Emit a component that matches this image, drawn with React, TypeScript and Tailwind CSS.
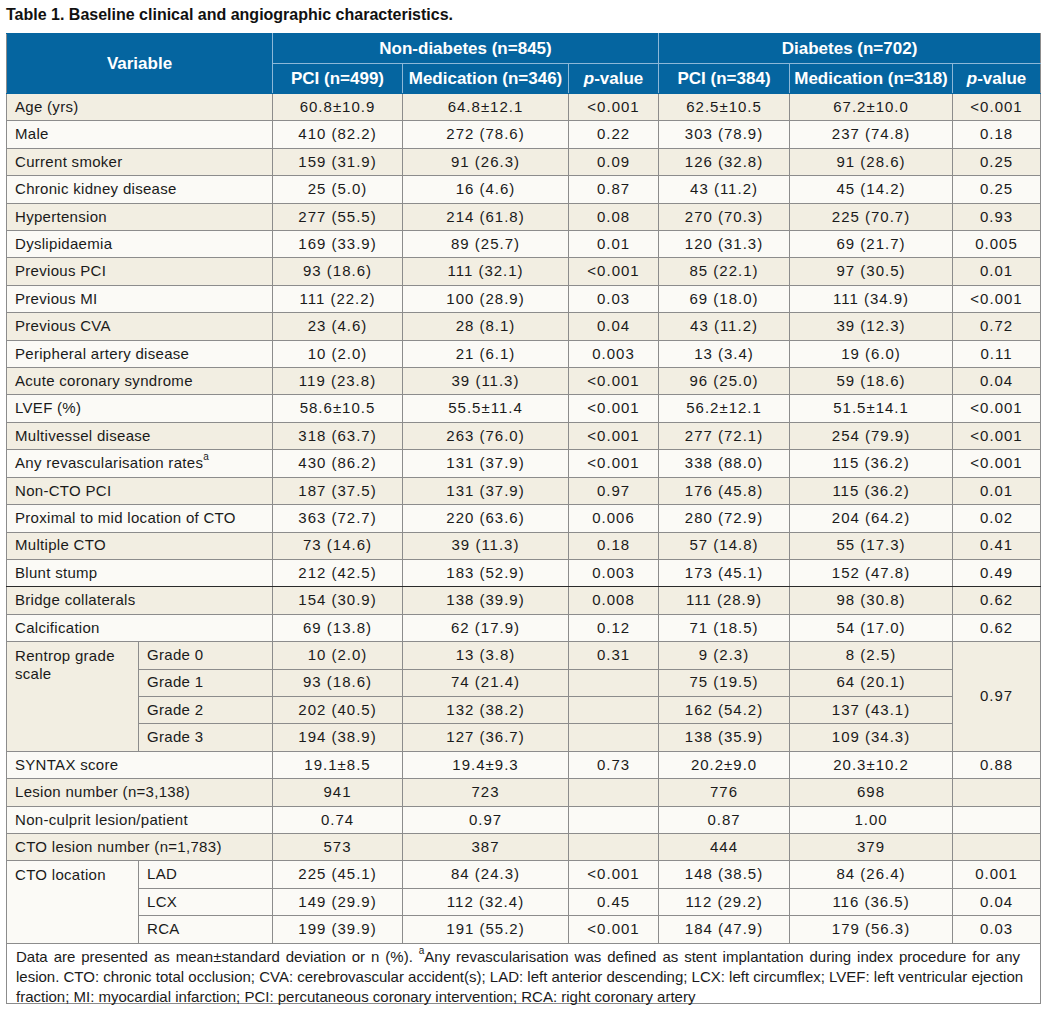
import React from "react"

type Row = { label: React.ReactNode; cells: string[] }

const simpleRows: Row[] = [
    { label: "Age (yrs)", cells: ["60.8±10.9", "64.8±12.1", "<0.001", "62.5±10.5", "67.2±10.0", "<0.001"] },
    { label: "Male", cells: ["410 (82.2)", "272 (78.6)", "0.22", "303 (78.9)", "237 (74.8)", "0.18"] },
    { label: "Current smoker", cells: ["159 (31.9)", "91 (26.3)", "0.09", "126 (32.8)", "91 (28.6)", "0.25"] },
    { label: "Chronic kidney disease", cells: ["25 (5.0)", "16 (4.6)", "0.87", "43 (11.2)", "45 (14.2)", "0.25"] },
    { label: "Hypertension", cells: ["277 (55.5)", "214 (61.8)", "0.08", "270 (70.3)", "225 (70.7)", "0.93"] },
    { label: "Dyslipidaemia", cells: ["169 (33.9)", "89 (25.7)", "0.01", "120 (31.3)", "69 (21.7)", "0.005"] },
    { label: "Previous PCI", cells: ["93 (18.6)", "111 (32.1)", "<0.001", "85 (22.1)", "97 (30.5)", "0.01"] },
    { label: "Previous MI", cells: ["111 (22.2)", "100 (28.9)", "0.03", "69 (18.0)", "111 (34.9)", "<0.001"] },
    { label: "Previous CVA", cells: ["23 (4.6)", "28 (8.1)", "0.04", "43 (11.2)", "39 (12.3)", "0.72"] },
    { label: "Peripheral artery disease", cells: ["10 (2.0)", "21 (6.1)", "0.003", "13 (3.4)", "19 (6.0)", "0.11"] },
    { label: "Acute coronary syndrome", cells: ["119 (23.8)", "39 (11.3)", "<0.001", "96 (25.0)", "59 (18.6)", "0.04"] },
    { label: "LVEF (%)", cells: ["58.6±10.5", "55.5±11.4", "<0.001", "56.2±12.1", "51.5±14.1", "<0.001"] },
    { label: "Multivessel disease", cells: ["318 (63.7)", "263 (76.0)", "<0.001", "277 (72.1)", "254 (79.9)", "<0.001"] },
    {
        label: (
            <>
                Any revascularisation rates<sup className="text-[10px] leading-none align-[3px]">a</sup>
            </>
        ),
        cells: ["430 (86.2)", "131 (37.9)", "<0.001", "338 (88.0)", "115 (36.2)", "<0.001"],
    },
    { label: "Non-CTO PCI", cells: ["187 (37.5)", "131 (37.9)", "0.97", "176 (45.8)", "115 (36.2)", "0.01"] },
    { label: "Proximal to mid location of CTO", cells: ["363 (72.7)", "220 (63.6)", "0.006", "280 (72.9)", "204 (64.2)", "0.02"] },
    { label: "Multiple CTO", cells: ["73 (14.6)", "39 (11.3)", "0.18", "57 (14.8)", "55 (17.3)", "0.41"] },
    { label: "Blunt stump", cells: ["212 (42.5)", "183 (52.9)", "0.003", "173 (45.1)", "152 (47.8)", "0.49"] },
    { label: "Bridge collaterals", cells: ["154 (30.9)", "138 (39.9)", "0.008", "111 (28.9)", "98 (30.8)", "0.62"] },
    { label: "Calcification", cells: ["69 (13.8)", "62 (17.9)", "0.12", "71 (18.5)", "54 (17.0)", "0.62"] },
]

const rentrop = [
    ["Grade 0", "10 (2.0)", "13 (3.8)", "0.31", "9 (2.3)", "8 (2.5)"],
    ["Grade 1", "93 (18.6)", "74 (21.4)", "", "75 (19.5)", "64 (20.1)"],
    ["Grade 2", "202 (40.5)", "132 (38.2)", "", "162 (54.2)", "137 (43.1)"],
    ["Grade 3", "194 (38.9)", "127 (36.7)", "", "138 (35.9)", "109 (34.3)"],
]

const lesionRows: Row[] = [
    { label: "SYNTAX score", cells: ["19.1±8.5", "19.4±9.3", "0.73", "20.2±9.0", "20.3±10.2", "0.88"] },
    { label: "Lesion number (n=3,138)", cells: ["941", "723", "", "776", "698", ""] },
    { label: "Non-culprit lesion/patient", cells: ["0.74", "0.97", "", "0.87", "1.00", ""] },
    { label: "CTO lesion number (n=1,783)", cells: ["573", "387", "", "444", "379", ""] },
]

const ctoLocation = [
    ["LAD", "225 (45.1)", "84 (24.3)", "<0.001", "148 (38.5)", "84 (26.4)", "0.001"],
    ["LCX", "149 (29.9)", "112 (32.4)", "0.45", "112 (29.2)", "116 (36.5)", "0.04"],
    ["RCA", "199 (39.9)", "191 (55.2)", "<0.001", "184 (47.9)", "179 (56.3)", "0.03"],
]

const beige = "bg-[#f2eee2]"
const light = "bg-[#fbfaf6]"
const td = "border border-[#8c8c8c] text-center px-[6px] tracking-[1px]"
const tdLeft = "border border-[#8c8c8c] text-left px-[8px] whitespace-nowrap tracking-[0.3px]"

function PValue() {
    return (
        <>
            <span className="italic">p</span>-value
        </>
    )
}

export default function App() {
    return (
        <div className="bg-white w-[1048px] min-h-[1009px] px-[6px] pt-[4px] font-['Liberation_Sans',Arial,sans-serif] text-[#1a1a1a]">
            <div className="text-[16px] font-bold leading-[22px] mb-[7px] text-[#111]">
                Table 1. Baseline clinical and angiographic characteristics.
            </div>

            <table className="w-[1034px] table-fixed border-collapse text-[15px]">
                <colgroup>
                    <col className="w-[132px]" />
                    <col className="w-[134px]" />
                    <col className="w-[130px]" />
                    <col className="w-[166px]" />
                    <col className="w-[90px]" />
                    <col className="w-[131px]" />
                    <col className="w-[163px]" />
                    <col className="w-[88px]" />
                </colgroup>
                <thead className="bg-[#0565a0] text-white text-[17px] font-bold">
                    <tr className="h-[30px]">
                        <th
                            colSpan={2}
                            rowSpan={2}
                            className="border border-[#0565a0] border-l-[#8c8c8c] border-r-[#8db8d8] font-bold"
                        >
                            Variable
                        </th>
                        <th colSpan={3} className="border border-[#0565a0] border-r-[#8db8d8] border-b-[#8db8d8] font-bold">
                            Non-diabetes (n=845)
                        </th>
                        <th colSpan={3} className="border border-[#0565a0] border-r-[#8c8c8c] border-b-[#8db8d8] font-bold">
                            Diabetes (n=702)
                        </th>
                    </tr>
                    <tr className="h-[30px]">
                        <th className="border border-[#0565a0] border-r-[#8db8d8] font-bold">PCI (n=499)</th>
                        <th className="border border-[#0565a0] border-r-[#8db8d8] font-bold">Medication (n=346)</th>
                        <th className="border border-[#0565a0] border-r-[#8db8d8] font-bold">
                            <PValue />
                        </th>
                        <th className="border border-[#0565a0] border-r-[#8db8d8] font-bold">PCI (n=384)</th>
                        <th className="border border-[#0565a0] border-r-[#8db8d8] font-bold">Medication (n=318)</th>
                        <th className="border border-[#0565a0] border-r-[#8c8c8c] font-bold">
                            <PValue />
                        </th>
                    </tr>
                </thead>
                <tbody>
                    {simpleRows.map((row, i) => {
                        const dark = i === 17 ? " border-b-[#2a2a2a]" : ""
                        return (
                            <tr key={i} className={`h-[27.42px] ${i % 2 === 0 ? beige : light}`}>
                                <td colSpan={2} className={tdLeft + dark}>
                                    {row.label}
                                </td>
                                {row.cells.map((c, j) => (
                                    <td key={j} className={td + dark}>
                                        {c}
                                    </td>
                                ))}
                            </tr>
                        )
                    })}

                    {rentrop.map((r, i) => (
                        <tr key={"r" + i} className={`h-[27.42px] ${beige}`}>
                            {i === 0 && (
                                <td
                                    rowSpan={4}
                                    className="border border-[#8c8c8c] text-left align-top px-[8px] pt-[5px] leading-[18px] tracking-[0.3px]"
                                >
                                    Rentrop grade scale
                                </td>
                            )}
                            <td className={tdLeft}>{r[0]}</td>
                            <td className={td}>{r[1]}</td>
                            <td className={td}>{r[2]}</td>
                            <td className={td}>{r[3]}</td>
                            <td className={td}>{r[4]}</td>
                            <td className={td}>{r[5]}</td>
                            {i === 0 && (
                                <td rowSpan={4} className={td}>
                                    0.97
                                </td>
                            )}
                        </tr>
                    ))}

                    {lesionRows.map((row, i) => (
                        <tr key={"l" + i} className={`h-[27.42px] ${i % 2 === 0 ? light : beige}`}>
                            <td colSpan={2} className={tdLeft}>
                                {row.label}
                            </td>
                            {row.cells.map((c, j) => (
                                <td key={j} className={td}>
                                    {c}
                                </td>
                            ))}
                        </tr>
                    ))}

                    {ctoLocation.map((r, i) => (
                        <tr key={"c" + i} className={`h-[27.42px] ${light}`}>
                            {i === 0 && (
                                <td
                                    rowSpan={3}
                                    className="border border-[#8c8c8c] text-left align-top px-[8px] pt-[5px] leading-[18px] tracking-[0.3px]"
                                >
                                    CTO location
                                </td>
                            )}
                            {r.map((c, j) => (
                                <td key={j} className={j === 0 ? tdLeft : td}>
                                    {c}
                                </td>
                            ))}
                        </tr>
                    ))}

                    <tr className="bg-white">
                        <td colSpan={8} className="border border-[#8c8c8c] p-0">
                            <div className="h-[59px] pl-[9px] pr-[20px] pt-[3px] leading-[20.3px]">
                                <div className="text-justify [text-align-last:justify]">
                                    Data are presented as mean±standard deviation or n (%).{" "}
                                    <sup className="text-[10px] leading-none align-[3px]">a</sup>Any revascularisation was
                                    defined as stent implantation during index procedure for any
                                </div>
                                <div className="whitespace-nowrap">
                                    lesion. CTO: chronic total occlusion; CVA: cerebrovascular accident(s); LAD: left anterior
                                    descending; LCX: left circumflex; LVEF: left ventricular ejection
                                </div>
                                <div className="whitespace-nowrap">
                                    fraction; MI: myocardial infarction; PCI: percutaneous coronary intervention; RCA: right coronary
                                    artery
                                </div>
                            </div>
                        </td>
                    </tr>
                </tbody>
            </table>
        </div>
    )
}
